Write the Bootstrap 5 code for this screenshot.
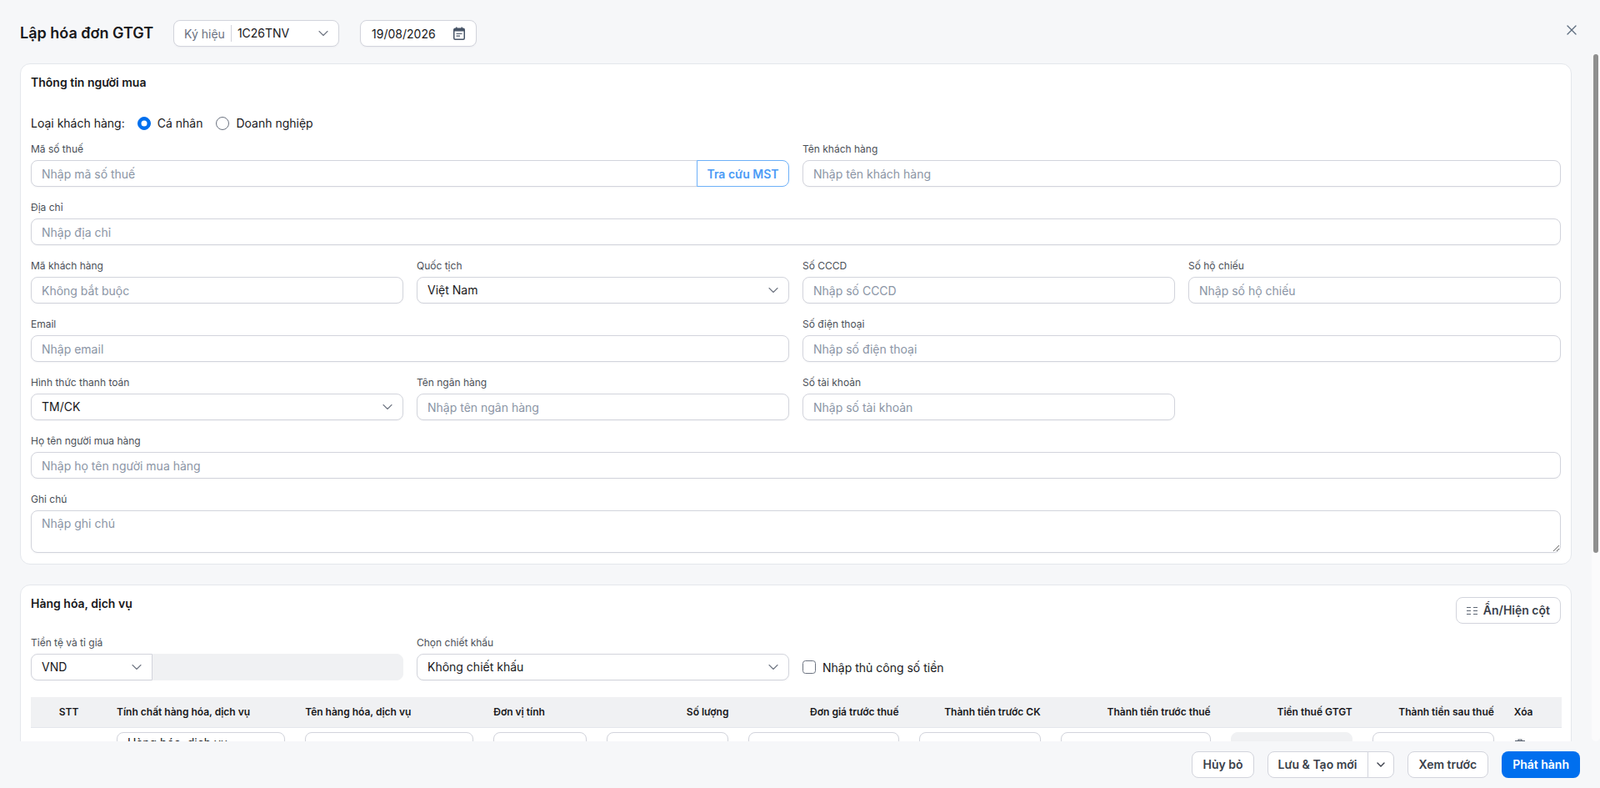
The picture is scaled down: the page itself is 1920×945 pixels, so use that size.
<!DOCTYPE html>
<html lang="vi">
<head>
  <meta charset="UTF-8" />
  <meta name="viewport" content="width=device-width, initial-scale=1.0" />
  <title>Lập hóa đơn GTGT</title>
  <link href="https://cdn.jsdelivr.net/npm/bootstrap@5.3.3/dist/css/bootstrap.min.css" rel="stylesheet">
  <style>
    html, body {
      height: 100%;
    }
    body {
      font-family: Inter, "Liberation Sans", sans-serif;
      font-size: 14px;
      color: #18181b;
      background: #f6f7f9;
      overflow: hidden;
    }
    .page-head {
      height: 65px;
      padding: 24px 22px 0 24px;
    }
    .page-title {
      font-size: 18px;
      line-height: 32px;
      font-weight: 600;
      margin: 0 24px 0 0;
    }
    .close-x {
      width: 24px;
      height: 24px;
      border: 0;
      background: none;
      padding: 0;
      color: #5b6b7d;
    }
    .page-main {
      flex: 1 1 0;
      min-height: 0;
    }
    .body-scroll {
      flex: 1 1 0;
      min-width: 0;
      overflow: hidden;
      padding: 11px 24px 0 24px;
    }
    .scroll-rail {
      flex: 0 0 10px;
      padding: 0 2px;
      background: #fbfbfc;
      border-radius: 0 0 6px 6px;
    }
    .scroll-thumb {
      height: 598px;
      background: #8f8f8f;
      border-radius: 3px;
    }
    .inv-card {
      border: 1px solid #e4e7ec;
      border-radius: 12px;
      background: #fff;
      margin-bottom: 24px;
    }
    .inv-card .card-body {
      padding: 14px 12px 13px;
    }
    .card-head {
      min-height: 32px;
    }
    .card-name {
      font-size: 14px;
      line-height: 16px;
      font-weight: 600;
      margin: 0;
    }
    .buyer-type {
      height: 20px;
      margin-top: 15px;
      margin-bottom: 12px;
      line-height: 20px;
    }
    .buyer-label {
      margin-right: 15px;
    }
    .form-check {
      margin: 0;
      padding-left: 0;
      min-height: 0;
      display: flex;
      align-items: center;
      gap: 8px;
    }
    .form-check .form-check-input {
      float: none;
      margin: 0;
      width: 16px;
      height: 16px;
      border-color: #6b7280;
    }
    .form-check .form-check-input:checked {
      background-color: #006fee;
      border-color: #006fee;
    }
    .field-label {
      display: block;
      font-size: 12px;
      line-height: 18px;
      color: #4a4f57;
      margin-bottom: 4px;
    }
    .goods-label {
      margin-top: 14px;
    }
    .form-control, .form-select {
      height: 32px;
      min-height: 32px;
      font-size: 14px;
      line-height: 20px;
      padding: 5px 12px;
      border: 1px solid #d2d4dc;
      border-radius: 8px;
      color: #18181b;
      box-shadow: 0 1px 2px rgba(16, 24, 40, .04);
    }
    .form-control::placeholder {
      color: #8b95a5;
    }
    .form-control.is-off {
      background: #f0f1f3;
      border-color: #f0f1f3;
      box-shadow: none;
    }
    textarea.form-control {
      height: 51px;
    }
    .form-select {
      padding-right: 32px;
      background-image: url("data:image/svg+xml,%3csvg xmlns='http://www.w3.org/2000/svg' viewBox='0 0 12 12'%3e%3cpath fill='none' stroke='%23717784' stroke-width='1.1' stroke-linecap='round' stroke-linejoin='round' d='M1 3.5l5 5 5-5'/%3e%3c/svg%3e");
      background-position: right 12px center;
      background-size: 12px 12px;
    }
    .btn-lookup {
      width: 111px;
      padding: 0;
      font-size: 14px;
      font-weight: 600;
      color: #4a9bf6;
      background: #fff;
      border: 1px solid #6db0f8;
      border-radius: 0 8px 8px 0;
    }
    .tool-field {
      height: 32px;
      background: #fff;
      border: 1px solid #d2d4dc;
      border-radius: 8px;
      box-shadow: 0 1px 2px rgba(16, 24, 40, .04);
    }
    .sign-field {
      width: 199px;
      margin-right: 25px;
    }
    .sign-field .sign-label {
      flex: 0 0 auto;
      padding-left: 12px;
      padding-right: 7px;
      color: #6b7280;
      white-space: nowrap;
    }
    .sign-field .sign-line {
      flex: 0 0 1px;
      height: 20px;
      background: #d2d4dc;
    }
    .sign-field .form-select {
      height: 30px;
      min-height: 30px;
      border: 0;
      box-shadow: none;
      padding-left: 7px;
      background-color: transparent;
    }
    .date-field {
      width: 140px;
      padding: 0 13px;
    }
    .btn-plain {
      height: 32px;
      padding: 0 13px;
      font-size: 14px;
      line-height: 30px;
      font-weight: 600;
      white-space: nowrap;
      color: #3a3f4a;
      background: #fff;
      border: 1px solid #d2d4dc;
      border-radius: 8px;
    }
    .btn-plain:hover {
      background: #f6f7f9;
      color: #3a3f4a;
      border-color: #d2d4dc;
    }
    .btn-columns {
      padding: 0 12px;
      gap: 7px;
    }
    .btn-cancel {
      padding: 0 12px;
    }
    .btn-issue {
      height: 32px;
      padding: 0 13px;
      font-size: 14px;
      line-height: 32px;
      font-weight: 600;
      color: #fff;
      background: #006fee;
      border: 0;
      border-radius: 8px;
    }
    .rate-group .form-select {
      flex: 0 0 146px;
      border-radius: 8px 0 0 8px;
    }
    .rate-group .form-control {
      border-radius: 0 8px 8px 0;
      margin-left: 0 !important;
    }
    .manual-check {
      height: 32px;
      margin-top: 20px;
    }
    .inv-table {
      table-layout: fixed;
      width: 1837px;
      margin: 20px 0 0;
      --bs-table-bg: transparent;
    }
    .inv-table th {
      --bs-table-bg: #f0f1f3;
      height: 36px;
      padding: 0 12px;
      font-size: 12px;
      font-weight: 600;
      line-height: 16px;
      vertical-align: middle;
      white-space: nowrap;
      color: #18181b;
      border-bottom: 1px solid #e4e7ec;
    }
    .inv-table td {
      padding: 5px 12px;
      border: 0;
      vertical-align: top;
    }
    .inv-table .kind-select {
      padding-top: 2px;
      padding-bottom: 8px;
    }
    .c-no { width: 91px; }
    .c-kind, .c-name { width: 226px; }
    .c-unit { width: 136px; }
    .c-qty, .c-base, .c-tax, .c-total { width: 170px; }
    .c-price, .c-net { width: 204px; }
    .c-del { width: 69px; }
    .trash-btn {
      display: block;
      border: 0;
      background: none;
      padding: 0;
      margin: 8px 0 0 1px;
      color: #5b6472;
    }
    .trash-btn svg {
      display: block;
    }
    .page-foot {
      height: 56px;
      padding: 12px 24px 0 0;
    }
    .split-btn .btn-plain:first-child {
      width: 121px;
      padding: 0;
      border-radius: 8px 0 0 8px;
    }
    .split-btn .btn-plain:last-child {
      width: 32px;
      padding: 0;
      margin-left: -1px;
      border-radius: 0 8px 8px 0;
    }
  </style>
</head>
<body class="d-flex flex-column">
  <!-- Header -->
  <div class="page-head d-flex align-items-start flex-shrink-0">
    <h1 class="page-title">Lập hóa đơn GTGT</h1>
    <div class="tool-field sign-field d-flex align-items-center">
      <span class="sign-label">Ký hiệu</span>
      <span class="sign-line"></span>
      <select class="form-select" aria-label="Ký hiệu">
        <option>1C26TNV</option>
      </select>
    </div>
    <div class="tool-field date-field d-flex align-items-center justify-content-between">
      <span>19/08/2026</span>
      <svg width="14" height="16" viewBox="0 0 14 16" fill="none" stroke="#475467">
        <rect x=".75" y="2.25" width="12.5" height="13" rx="1.5" stroke-width="1.5"/>
        <path d="M1 4.2h12" stroke-width="2.6"/>
        <path d="M3.8.5v2M10.2.5v2" stroke-width="1.5"/>
        <path d="M3.5 8.5h7M3.5 11.2h4.5" stroke-width="1.2"/>
      </svg>
    </div>
    <button type="button" class="close-x ms-auto d-flex align-items-center justify-content-center" aria-label="Đóng">
      <svg width="12" height="12" viewBox="0 0 12 12" fill="none" stroke="currentColor" stroke-width="1.3" stroke-linecap="round">
        <path d="M1 1l10 10M11 1L1 11"/>
      </svg>
    </button>
  </div>

  <div class="page-main d-flex">
    <div class="body-scroll">
      <!-- Buyer -->
      <div class="card inv-card">
        <div class="card-body">
          <div class="card-head">
            <h2 class="card-name">Thông tin người mua</h2>
          </div>
          <div class="buyer-type d-flex align-items-center">
            <span class="buyer-label">Loại khách hàng:</span>
            <div class="form-check me-3">
              <input class="form-check-input" type="radio" name="buyerType" id="typePerson" checked>
              <label class="form-check-label" for="typePerson">Cá nhân</label>
            </div>
            <div class="form-check">
              <input class="form-check-input" type="radio" name="buyerType" id="typeCompany">
              <label class="form-check-label" for="typeCompany">Doanh nghiệp</label>
            </div>
          </div>
          <div class="row g-3">
            <div class="col-6">
              <label class="field-label">Mã số thuế</label>
              <div class="input-group">
                <input class="form-control" placeholder="Nhập mã số thuế">
                <button class="btn btn-lookup" type="button">Tra cứu MST</button>
              </div>
            </div>
            <div class="col-6">
              <label class="field-label">Tên khách hàng</label>
              <input class="form-control" placeholder="Nhập tên khách hàng">
            </div>
            <div class="col-12">
              <label class="field-label">Địa chỉ</label>
              <input class="form-control" placeholder="Nhập địa chỉ">
            </div>
            <div class="col-3">
              <label class="field-label">Mã khách hàng</label>
              <input class="form-control" placeholder="Không bắt buộc">
            </div>
            <div class="col-3">
              <label class="field-label">Quốc tịch</label>
              <select class="form-select"><option>Việt Nam</option></select>
            </div>
            <div class="col-3">
              <label class="field-label">Số CCCD</label>
              <input class="form-control" placeholder="Nhập số CCCD">
            </div>
            <div class="col-3">
              <label class="field-label">Số hộ chiếu</label>
              <input class="form-control" placeholder="Nhập số hộ chiếu">
            </div>
            <div class="col-6">
              <label class="field-label">Email</label>
              <input class="form-control" placeholder="Nhập email">
            </div>
            <div class="col-6">
              <label class="field-label">Số điện thoại</label>
              <input class="form-control" placeholder="Nhập số điện thoại">
            </div>
            <div class="col-3">
              <label class="field-label">Hình thức thanh toán</label>
              <select class="form-select"><option>TM/CK</option></select>
            </div>
            <div class="col-3">
              <label class="field-label">Tên ngân hàng</label>
              <input class="form-control" placeholder="Nhập tên ngân hàng">
            </div>
            <div class="col-3">
              <label class="field-label">Số tài khoản</label>
              <input class="form-control" placeholder="Nhập số tài khoản">
            </div>
            <div class="col-12">
              <label class="field-label">Họ tên người mua hàng</label>
              <input class="form-control" placeholder="Nhập họ tên người mua hàng">
            </div>
            <div class="col-12">
              <label class="field-label">Ghi chú</label>
              <textarea class="form-control" placeholder="Nhập ghi chú"></textarea>
            </div>
          </div>
        </div>
      </div>

      <!-- Goods -->
      <div class="card inv-card">
        <div class="card-body">
          <div class="card-head d-flex justify-content-between align-items-start">
            <h2 class="card-name">Hàng hóa, dịch vụ</h2>
            <button type="button" class="btn btn-plain btn-columns d-flex align-items-center">
              <svg width="13" height="9" viewBox="0 0 13 9" fill="none" stroke="#5b6472">
                <path d="M0 .5h5M0 4.5h5M0 8.5h5M8 .5h5M8 4.5h5M8 8.5h5"/>
              </svg>
              Ẩn/Hiện cột
            </button>
          </div>
          <div class="row g-3 mt-0">
            <div class="col-3 pt-0 mt-0">
              <label class="field-label goods-label">Tiền tệ và tỉ giá</label>
              <div class="input-group rate-group">
                <select class="form-select"><option>VND</option></select>
                <input class="form-control is-off" disabled>
              </div>
            </div>
            <div class="col-3 pt-0 mt-0">
              <label class="field-label goods-label">Chọn chiết khấu</label>
              <select class="form-select"><option>Không chiết khấu</option></select>
            </div>
            <div class="col-3 pt-0 mt-3">
              <div class="form-check manual-check">
                <input class="form-check-input" type="checkbox" id="manualAmount">
                <label class="form-check-label" for="manualAmount">Nhập thủ công số tiền</label>
              </div>
            </div>
          </div>

          <table class="table inv-table">
            <colgroup>
              <col class="c-no"><col class="c-kind"><col class="c-name"><col class="c-unit"><col class="c-qty"><col class="c-price"><col class="c-base"><col class="c-net"><col class="c-tax"><col class="c-total"><col class="c-del">
            </colgroup>
            <thead>
              <tr>
                <th class="text-center">STT</th>
                <th>Tính chất hàng hóa, dịch vụ</th>
                <th>Tên hàng hóa, dịch vụ</th>
                <th>Đơn vị tính</th>
                <th class="text-end">Số lượng</th>
                <th class="text-end">Đơn giá trước thuế</th>
                <th class="text-end">Thành tiền trước CK</th>
                <th class="text-end">Thành tiền trước thuế</th>
                <th class="text-end">Tiền thuế GTGT</th>
                <th class="text-end">Thành tiền sau thuế</th>
                <th>Xóa</th>
              </tr>
            </thead>
            <tbody>
              <tr>
                <td></td>
                <td><select class="form-select kind-select"><option>Hàng hóa, dịch vụ</option></select></td>
                <td><input class="form-control"></td>
                <td><input class="form-control"></td>
                <td><input class="form-control"></td>
                <td><input class="form-control"></td>
                <td><input class="form-control"></td>
                <td><input class="form-control"></td>
                <td><input class="form-control is-off" disabled></td>
                <td><input class="form-control"></td>
                <td>
                  <button type="button" class="trash-btn" aria-label="Xóa">
                    <svg width="12" height="14" viewBox="0 0 12 14" fill="none" stroke="currentColor" stroke-width="1.2">
                      <path d="M4 2V1h4v1M0 2.5h12M1.5 2.5l.7 11h7.6l.7-11"/>
                    </svg>
                  </button>
                </td>
              </tr>
            </tbody>
          </table>
        </div>
      </div>
    </div>
    <div class="scroll-rail">
      <div class="scroll-thumb"></div>
    </div>
  </div>

  <!-- Footer -->
  <div class="page-foot d-flex justify-content-end align-items-start gap-3 flex-shrink-0">
    <button type="button" class="btn btn-plain btn-cancel">Hủy bỏ</button>
    <div class="btn-group split-btn">
      <button type="button" class="btn btn-plain">Lưu &amp; Tạo mới</button>
      <button type="button" class="btn btn-plain d-flex align-items-center justify-content-center" aria-label="Thêm">
        <svg width="10" height="6" viewBox="0 0 10 6" fill="none" stroke="#3a3f4a" stroke-width="1.4" stroke-linecap="round" stroke-linejoin="round">
          <path d="M1 1l4 4 4-4"/>
        </svg>
      </button>
    </div>
    <button type="button" class="btn btn-plain">Xem trước</button>
    <button type="button" class="btn btn-issue">Phát hành</button>
  </div>

  <script src="https://cdn.jsdelivr.net/npm/bootstrap@5.3.3/dist/js/bootstrap.bundle.min.js"></script>
</body>
</html>
